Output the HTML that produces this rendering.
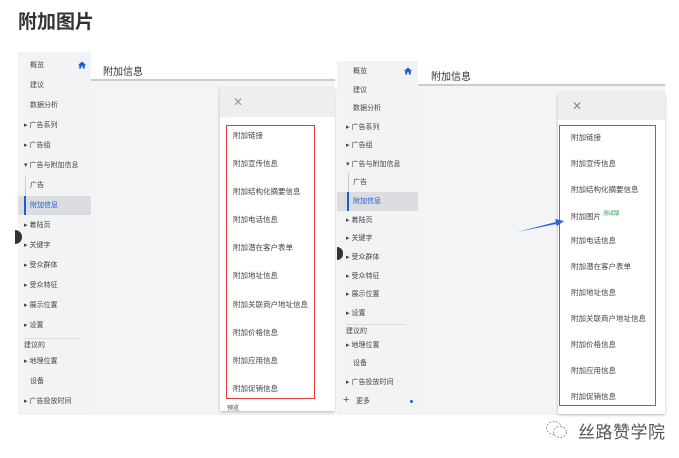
<!DOCTYPE html><html><head><meta charset="utf-8"><style>
*{margin:0;padding:0;box-sizing:border-box}
body{width:679px;height:458px;background:#fff;position:relative;overflow:hidden;font-family:"Liberation Sans","Noto Sans CJK SC",sans-serif;}
.a{position:absolute;white-space:nowrap}
.s{font-size:7px;color:#444;line-height:9px}
.d{font-size:7.5px;color:#444;line-height:9px}
</style></head><body>
<div class="a" style="left:18px;top:11px;font-size:19px;font-weight:bold;color:#333;line-height:24px">附加图片</div>

<!-- left panel -->
<div class="a" style="left:18px;top:52px;width:317px;height:363px;background:#f3f4f6"></div>
<div class="a" style="left:18px;top:52px;width:73px;height:363px;background:#f1f3f4"></div>
<div class="a" style="left:91px;top:52px;width:244px;height:29px;background:#fff;border-bottom:2px solid #ccc"></div>
<div class="a" style="left:103px;top:63px;font-size:10px;color:#333">附加信息</div>
<div class="a" style="left:18px;top:196px;width:73px;height:19px;background:#dcdde0"></div>
<div class="a" style="left:24px;top:196px;width:2px;height:19px;background:#1a5fd0"></div>
<div class="a" style="left:25px;top:176px;width:1px;height:20px;background:#ccc"></div>
<svg class="a" style="left:78px;top:61px" width="8" height="8"><path d="M4 0.5 L8 4 L6.8 4 L6.8 7.5 L4.8 7.5 L4.8 5.3 L3.2 5.3 L3.2 7.5 L1.2 7.5 L1.2 4 L0 4 Z" fill="#1a5fd0"/></svg>
<div class="a s" style="left:30px;top:61px">概览</div>
<div class="a s" style="left:30px;top:81px">建议</div>
<div class="a s" style="left:30px;top:101px">数据分析</div>
<div class="a s" style="left:24px;top:121px">▸ 广告系列</div>
<div class="a s" style="left:24px;top:141px">▸ 广告组</div>
<div class="a s" style="left:24px;top:161px">▾ 广告与附加信息</div>
<div class="a s" style="left:30px;top:181px">广告</div>
<div class="a s" style="left:30px;top:201px;color:#1a5fd0">附加信息</div>
<div class="a s" style="left:24px;top:221px">▸ 着陆页</div>
<div class="a s" style="left:24px;top:241px">▸ 关键字</div>
<div class="a s" style="left:24px;top:261px">▸ 受众群体</div>
<div class="a s" style="left:24px;top:281px">▸ 受众特征</div>
<div class="a s" style="left:24px;top:301px">▸ 展示位置</div>
<div class="a s" style="left:24px;top:321px">▸ 设置</div>
<div class="a" style="left:24px;top:338px;width:56px;height:1px;background:#ddd"></div>
<div class="a s" style="left:24px;top:341px">建议的</div>
<div class="a s" style="left:24px;top:357px">▸ 地理位置</div>
<div class="a s" style="left:30px;top:377px">设备</div>
<div class="a s" style="left:24px;top:397px">▸ 广告投放时间</div>
<div class="a" style="left:15px;top:230px;width:7px;height:14px;border-radius:0 7px 7px 0;background:#333"></div>
<div class="a" style="left:220px;top:88px;width:115px;height:323px;background:#fff;box-shadow:0 1px 3px rgba(0,0,0,.25)"></div>
<div class="a" style="left:220px;top:88px;width:115px;height:29px;background:#eeeeee"></div>
<div class="a" style="left:233px;top:95px;font-size:12px;color:#999">✕</div>
<div class="a" style="left:226px;top:125px;width:89px;height:274px;border:1.5px solid #e63b3b"></div>
<div class="a d" style="left:233px;top:131px">附加链接</div>
<div class="a d" style="left:233px;top:159px">附加宣传信息</div>
<div class="a d" style="left:233px;top:187px">附加结构化摘要信息</div>
<div class="a d" style="left:233px;top:215px">附加电话信息</div>
<div class="a d" style="left:233px;top:243px">附加潜在客户表单</div>
<div class="a d" style="left:233px;top:271px">附加地址信息</div>
<div class="a d" style="left:233px;top:300px">附加关联商户地址信息</div>
<div class="a d" style="left:233px;top:328px">附加价格信息</div>
<div class="a d" style="left:233px;top:356px">附加应用信息</div>
<div class="a d" style="left:233px;top:384px">附加促销信息</div>
<div class="a s" style="left:227px;top:405px;font-size:6px">预览</div>

<!-- right panel -->
<div class="a" style="left:337px;top:61px;width:328px;height:354px;background:#f3f4f6"></div>
<div class="a" style="left:337px;top:61px;width:81px;height:354px;background:#f1f3f4"></div>
<div class="a" style="left:418px;top:61px;width:247px;height:25px;background:#fff;border-bottom:2px solid #ccc"></div>
<div class="a" style="left:431px;top:68px;font-size:10px;color:#333">附加信息</div>
<div class="a" style="left:337px;top:192px;width:81px;height:19px;background:#dcdde0"></div>
<div class="a" style="left:347px;top:192px;width:2px;height:19px;background:#1a5fd0"></div>
<div class="a" style="left:348px;top:173px;width:1px;height:19px;background:#ccc"></div>
<svg class="a" style="left:404px;top:67px" width="8" height="8"><path d="M4 0.5 L8 4 L6.8 4 L6.8 7.5 L4.8 7.5 L4.8 5.3 L3.2 5.3 L3.2 7.5 L1.2 7.5 L1.2 4 L0 4 Z" fill="#1a5fd0"/></svg>
<div class="a s" style="left:353px;top:67px">概览</div>
<div class="a s" style="left:353px;top:86px">建议</div>
<div class="a s" style="left:353px;top:104px">数据分析</div>
<div class="a s" style="left:346px;top:123px">▸ 广告系列</div>
<div class="a s" style="left:346px;top:141px">▸ 广告组</div>
<div class="a s" style="left:346px;top:160px">▾ 广告与附加信息</div>
<div class="a s" style="left:353px;top:178px">广告</div>
<div class="a s" style="left:353px;top:197px;color:#1a5fd0">附加信息</div>
<div class="a s" style="left:346px;top:216px">▸ 着陆页</div>
<div class="a s" style="left:346px;top:234px">▸ 关键字</div>
<div class="a s" style="left:346px;top:253px">▸ 受众群体</div>
<div class="a s" style="left:346px;top:272px">▸ 受众特征</div>
<div class="a s" style="left:346px;top:290px">▸ 展示位置</div>
<div class="a s" style="left:346px;top:309px">▸ 设置</div>
<div class="a" style="left:346px;top:324px;width:60px;height:1px;background:#ddd"></div>
<div class="a s" style="left:346px;top:327px">建议的</div>
<div class="a s" style="left:346px;top:341px">▸ 地理位置</div>
<div class="a s" style="left:353px;top:359px">设备</div>
<div class="a s" style="left:346px;top:378px">▸ 广告投放时间</div>
<div class="a" style="left:343px;top:394px;font-size:11px;color:#555">+</div>
<div class="a s" style="left:356px;top:397px">更多</div>
<div class="a" style="left:410px;top:400px;width:3px;height:3px;border-radius:50%;background:#1a5fd0"></div>
<div class="a" style="left:337px;top:247px;width:6px;height:13px;border-radius:0 7px 7px 0;background:#333"></div>
<div class="a" style="left:558px;top:93px;width:107px;height:321px;background:#fff;box-shadow:0 1px 3px rgba(0,0,0,.25)"></div>
<div class="a" style="left:558px;top:93px;width:107px;height:27px;background:#eeeeee"></div>
<div class="a" style="left:572px;top:99px;font-size:12px;color:#888">✕</div>
<div class="a" style="left:559px;top:125px;width:97px;height:281px;border:1.5px solid #e63b3b"></div>
<div class="a d" style="left:571px;top:133px">附加链接</div>
<div class="a d" style="left:571px;top:159px">附加宣传信息</div>
<div class="a d" style="left:571px;top:185px">附加结构化摘要信息</div>
<div class="a d" style="left:571px;top:210px">附加图片 <span style="color:#1e9e4a;font-size:5.5px;vertical-align:4px">测试版</span></div>
<div class="a d" style="left:571px;top:236px">附加电话信息</div>
<div class="a d" style="left:571px;top:262px">附加潜在客户表单</div>
<div class="a d" style="left:571px;top:288px">附加地址信息</div>
<div class="a d" style="left:571px;top:314px">附加关联商户地址信息</div>
<div class="a d" style="left:571px;top:340px">附加价格信息</div>
<div class="a d" style="left:571px;top:366px">附加应用信息</div>
<div class="a d" style="left:571px;top:392px">附加促销信息</div>
<svg class="a" style="left:510px;top:210px" width="60" height="30"><path d="M7 22 L46 12 L45 9 L54 11 L47 16 L46 14 Z" fill="#2f62d8"/></svg>

<!-- watermark -->
<svg class="a" style="left:545px;top:419px" width="24" height="22"><g fill="none" stroke="#999" stroke-width="1" stroke-dasharray="2 1.5"><ellipse cx="9" cy="9" rx="7.5" ry="6.5"/><ellipse cx="15" cy="13" rx="6.5" ry="5.5" fill="#fff"/></g></svg>
<div class="a" style="left:578px;top:418px;font-size:17px;color:#555;letter-spacing:0.5px">丝路赞学院</div>
</body></html>
